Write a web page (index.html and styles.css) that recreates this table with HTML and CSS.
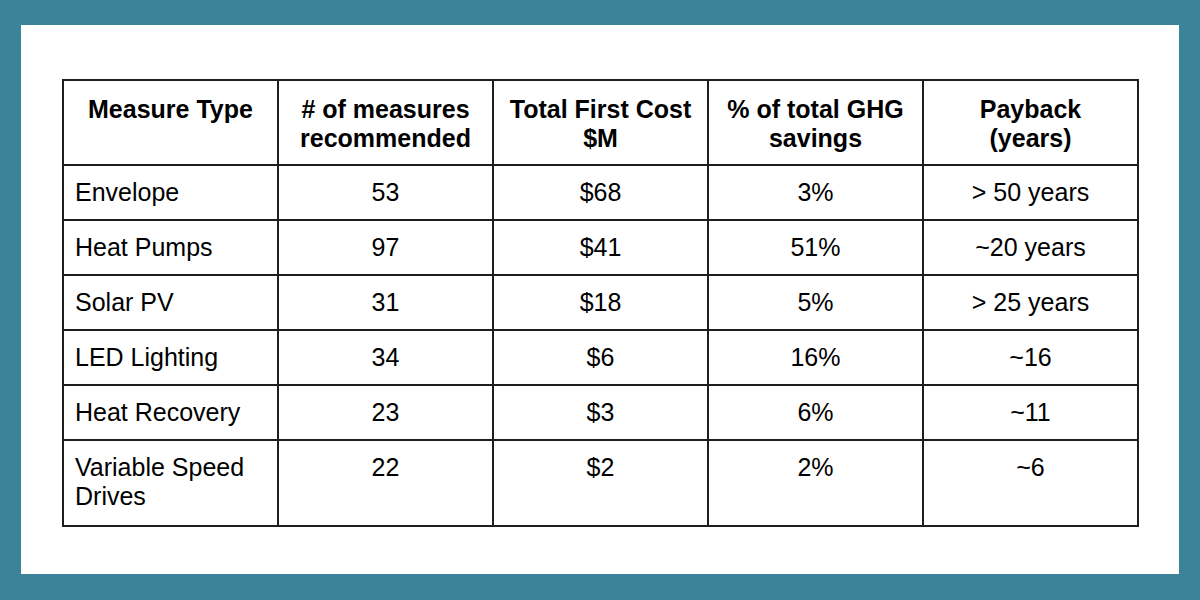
FILE: index.html
```html
<!DOCTYPE html>
<html>
<head>
<meta charset="utf-8">
<link rel="stylesheet" href="styles.css">
</head>
<body>
<div class="card">
  <table class="measures">
    <colgroup><col><col><col><col><col></colgroup>
    <thead>
      <tr>
        <th>Measure Type</th>
        <th># of measures<br>recommended</th>
        <th>Total First Cost<br>$M</th>
        <th>% of total GHG<br>savings</th>
        <th>Payback<br>(years)</th>
      </tr>
    </thead>
    <tbody>
      <tr><td class="name">Envelope</td><td>53</td><td>$68</td><td>3%</td><td>&gt; 50 years</td></tr>
      <tr><td class="name">Heat Pumps</td><td>97</td><td>$41</td><td>51%</td><td>~20 years</td></tr>
      <tr><td class="name">Solar PV</td><td>31</td><td>$18</td><td>5%</td><td>&gt; 25 years</td></tr>
      <tr><td class="name">LED Lighting</td><td>34</td><td>$6</td><td>16%</td><td>~16</td></tr>
      <tr><td class="name">Heat Recovery</td><td>23</td><td>$3</td><td>6%</td><td>~11</td></tr>
      <tr class="tall"><td class="name">Variable Speed<br>Drives</td><td>22</td><td>$2</td><td>2%</td><td>~6</td></tr>
    </tbody>
  </table>
</div>
</body>
</html>
```
FILE: styles.css
```css
html, body {
  margin: 0;
  padding: 0;
}
body {
  background: #3a8399;
  padding: 25px 21px 26px 21px;
  box-sizing: border-box;
  width: 1200px;
  height: 600px;
  font-family: "Liberation Sans", Arial, sans-serif;
}
.card {
  background: #ffffff;
  height: 549px;
  padding: 54px 0 0 41px;
  box-sizing: border-box;
}
.measures {
  border-collapse: collapse;
  table-layout: fixed;
  width: 1077px;
  color: #000;
  font-size: 25px;
  line-height: 29px;
}
.measures col {
  width: 215px;
}
.measures th,
.measures td {
  border: 2px solid #1e1e1e;
  text-align: center;
  vertical-align: top;
  padding: 12px 10px 12px 10px;
}
.measures th {
  font-weight: bold;
  padding-top: 14px;
  padding-bottom: 11px;
}
.measures td.name {
  text-align: left;
  padding-left: 11px;
}
.measures tr.tall td {
  padding-bottom: 14px;
}
```
